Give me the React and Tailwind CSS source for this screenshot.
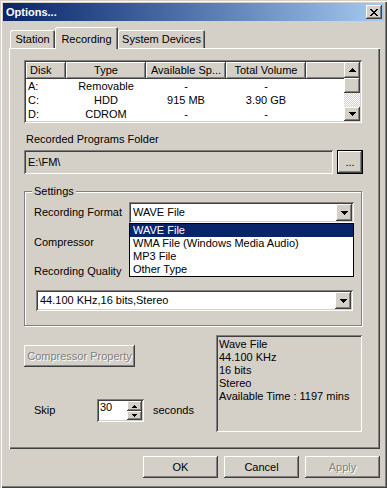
import React from "react";

const raised =
  "shadow-[inset_-1px_-1px_#404040,inset_1px_1px_#ffffff,inset_-2px_-2px_#808080,inset_2px_2px_#d4d0c8]";
const sunken =
  "shadow-[inset_1px_1px_#808080,inset_-1px_-1px_#ffffff,inset_2px_2px_#404040,inset_-2px_-2px_#d4d0c8]";

function DownArrow({ w = 7, h = 4 }) {
  return (
    <svg width={w} height={h} viewBox={`0 0 ${w} ${h}`} shapeRendering="crispEdges">
      <polygon points={`0,0 ${w},0 ${w / 2},${h}`} fill="#000" />
    </svg>
  );
}
function UpArrow({ w = 7, h = 4 }) {
  return (
    <svg width={w} height={h} viewBox={`0 0 ${w} ${h}`} shapeRendering="crispEdges">
      <polygon points={`0,${h} ${w},${h} ${w / 2},0`} fill="#000" />
    </svg>
  );
}

function Combo({ text, className }) {
  return (
    <div className={`relative flex h-[21px] items-center bg-white ${sunken} ${className}`}>
      <span className="flex-1 pl-[4px] leading-[13px]">{text}</span>
      <div className={`mr-[2px] flex h-[17px] w-[16px] items-center justify-center bg-[#d4d0c8] ${raised}`}>
        <DownArrow />
      </div>
    </div>
  );
}

function Button({ children, disabled, className }) {
  return (
    <div
      className={`flex h-[22px] items-center justify-center bg-[#d4d0c8] ${raised} ${
        disabled ? "text-[#808080] [text-shadow:1px_1px_0_#ffffff]" : "text-black"
      } ${className}`}
    >
      {children}
    </div>
  );
}

function HeaderCell({ children, w, left }) {
  return (
    <div
      className={`flex h-[17px] shrink-0 items-center overflow-hidden whitespace-nowrap bg-[#d4d0c8] shadow-[inset_-1px_-1px_#404040,inset_1px_1px_#ffffff,inset_-2px_-2px_#808080] ${
        left ? "justify-start pl-[4px]" : "justify-center"
      }`}
      style={{ width: w }}
    >
      {children}
    </div>
  );
}

const rows = [
  ["A:", "Removable", "-", "-"],
  ["C:", "HDD", "915 MB", "3.90 GB"],
  ["D:", "CDROM", "-", "-"],
];

export default function App() {
  return (
    <div className="h-[488px] w-[387px] overflow-hidden bg-[#d4d0c8] font-['Liberation_Sans',Arial,sans-serif] text-[11px] text-black">
      <div className="relative h-[488px] w-[387px] p-[3px] shadow-[inset_1px_1px_#d4d0c8,inset_2px_2px_#ffffff,inset_-1px_-1px_#404040,inset_-2px_-2px_#808080]">
        {/* Title bar */}
        <div className="flex h-[18px] items-center bg-gradient-to-r from-[#0a246a] to-[#a6caf0] pl-[3px] pr-[2px]">
          <span className="flex-1 text-[11px] font-bold text-white">Options...</span>
          <div className={`flex h-[14px] w-[16px] items-center justify-center bg-[#d4d0c8] ${raised}`}>
            <svg width="8" height="7" viewBox="0 0 8 7" shapeRendering="crispEdges">
              <path d="M0 0h2l2 2.5L6 0h2L5 3.5 8 7H6L4 4.5 2 7H0l3-3.5z" fill="#000" />
            </svg>
          </div>
        </div>

        {/* Tabs */}
        <div className="mt-[6px] flex h-[21px] items-end pl-[7px]">
          <div className="flex h-[18px] w-[45px] items-center justify-center rounded-t-[2px] shadow-[inset_1px_1px_#ffffff,inset_-1px_0_#404040,inset_-2px_0_#808080]">
            Station
          </div>
          <div className="relative z-10 -mb-[1px] flex h-[22px] w-[63px] items-start justify-center rounded-t-[2px] bg-[#d4d0c8] pt-[4px] shadow-[inset_1px_1px_#ffffff,inset_-1px_0_#404040,inset_-2px_0_#808080]">
            Recording
          </div>
          <div className="flex h-[18px] w-[87px] items-center justify-center rounded-t-[2px] shadow-[inset_1px_1px_#ffffff,inset_-1px_0_#404040,inset_-2px_0_#808080]">
            System Devices
          </div>
        </div>

        {/* Tab panel */}
        <div className="relative ml-[6px] h-[401px] w-[371px] pl-[15px] pt-[12px] shadow-[inset_1px_1px_#ffffff,inset_-1px_-1px_#404040,inset_-2px_-2px_#808080]">
          {/* List view */}
          <div className={`flex h-[63px] w-[338px] bg-white p-[2px] ${sunken}`}>
            <div className="flex-1 overflow-hidden">
              <div className="flex bg-[#d4d0c8]">
                <HeaderCell w={40} left>Disk</HeaderCell>
                <HeaderCell w={80}>Type</HeaderCell>
                <HeaderCell w={80}>Available Sp...</HeaderCell>
                <HeaderCell w={80}>Total Volume</HeaderCell>
                <HeaderCell w={40}></HeaderCell>
              </div>
              {rows.map((r) => (
                <div key={r[0]} className="flex h-[14px] items-center">
                  <div className="w-[40px] pl-[2px]">{r[0]}</div>
                  <div className="w-[80px] text-center">{r[1]}</div>
                  <div className="w-[80px] text-center">{r[2]}</div>
                  <div className="w-[80px] text-center">{r[3]}</div>
                </div>
              ))}
            </div>
            <div className="flex w-[16px] flex-col">
              <div className={`flex h-[16px] items-center justify-center bg-[#d4d0c8] ${raised}`}>
                <UpArrow />
              </div>
              <div className={`h-[15px] bg-[#d4d0c8] ${raised}`} />
              <div className="flex-1 bg-[repeating-conic-gradient(#ffffff_0_25%,#d4d0c8_0_50%)] bg-[length:2px_2px]" />
              <div className={`flex h-[14px] items-center justify-center bg-[#d4d0c8] ${raised}`}>
                <DownArrow />
              </div>
            </div>
          </div>

          {/* Folder */}
          <div className="mt-[10px] h-[13px] pl-[2px] leading-[13px]">Recorded Programs Folder</div>
          <div className="mt-[4px] flex h-[24px] w-[339px] gap-[4px]">
            <div className={`flex w-[309px] items-center bg-[#d4d0c8] pl-[4px] ${sunken}`}>E:\FM\</div>
            <div className="flex w-[26px] items-center justify-center border border-black bg-[#d4d0c8] shadow-[inset_-1px_-1px_#404040,inset_1px_1px_#ffffff,inset_-2px_-2px_#808080]">
              ...
            </div>
          </div>

          {/* Settings group */}
          <div className="relative mt-[17px] h-[135px] w-[338px] border border-[#808080] shadow-[inset_1px_1px_#ffffff,1px_1px_#ffffff] pt-[10px]">
            <div className="absolute -top-[7px] left-[7px] bg-[#d4d0c8] px-[2px] leading-[13px]">Settings</div>
            <div className="flex h-[21px] items-center pl-[9px]">
              <div className="w-[95px]">Recording Format</div>
              <Combo text="WAVE File" className="w-[225px]" />
            </div>
            <div className="mt-[9px] flex h-[21px] items-center pl-[9px]">
              <div className="w-[95px]">Compressor</div>
            </div>
            <div className="mt-[8px] flex h-[21px] items-center pl-[9px]">
              <div className="w-[95px] whitespace-nowrap">Recording Quality</div>
            </div>
            <div className="mt-[8px] pl-[11px]">
              <Combo text="44.100 KHz,16 bits,Stereo" className="w-[317px]" />
            </div>

            {/* Dropdown list */}
            <div className="absolute left-[104px] top-[31px] z-20 flex h-[54px] w-[225px] flex-col border border-black bg-white">
              <div className="flex h-[13px] items-center bg-[#0a246a] pl-[3px] text-white">WAVE File</div>
              <div className="flex h-[13px] items-center pl-[3px]">WMA File (Windows Media Audio)</div>
              <div className="flex h-[13px] items-center pl-[3px]">MP3 File</div>
              <div className="flex h-[13px] items-center pl-[3px]">Other Type</div>
            </div>
          </div>

          {/* Bottom area */}
          <div className="mt-[9px] flex w-[338px]">
            <div className="flex w-[192px] flex-col">
              <Button disabled className="mt-[10px] w-[111px]">Compressor Property</Button>
              <div className="mt-[32px] flex h-[23px] items-center">
                <div className="w-[73px] pl-[10px]">Skip</div>
                <div className={`flex h-[23px] w-[47px] bg-white p-[2px] ${sunken}`}>
                  <div className="flex-1 pl-[1px] leading-[13px]">30</div>
                  <div className="flex w-[15px] flex-col">
                    <div className={`flex h-[10px] items-center justify-center bg-[#d4d0c8] ${raised}`}>
                      <UpArrow w={5} h={3} />
                    </div>
                    <div className={`flex h-[9px] items-center justify-center bg-[#d4d0c8] ${raised}`}>
                      <DownArrow w={5} h={3} />
                    </div>
                  </div>
                </div>
                <div className="pl-[9px]">seconds</div>
              </div>
            </div>
            <div className={`h-[97px] w-[146px] px-[3px] py-[3px] leading-[13px] ${sunken}`}>
              <div>Wave File</div>
              <div>44.100 KHz</div>
              <div>16 bits</div>
              <div>Stereo</div>
              <div className="whitespace-nowrap">Available Time : 1197 mins</div>
            </div>
          </div>
        </div>

        {/* Dialog buttons */}
        <div className="mt-[7px] flex justify-end gap-[6px] pr-[4px]">
          <Button className="w-[75px]">OK</Button>
          <Button className="w-[75px]">Cancel</Button>
          <Button disabled className="w-[75px]">Apply</Button>
        </div>
      </div>
    </div>
  );
}
